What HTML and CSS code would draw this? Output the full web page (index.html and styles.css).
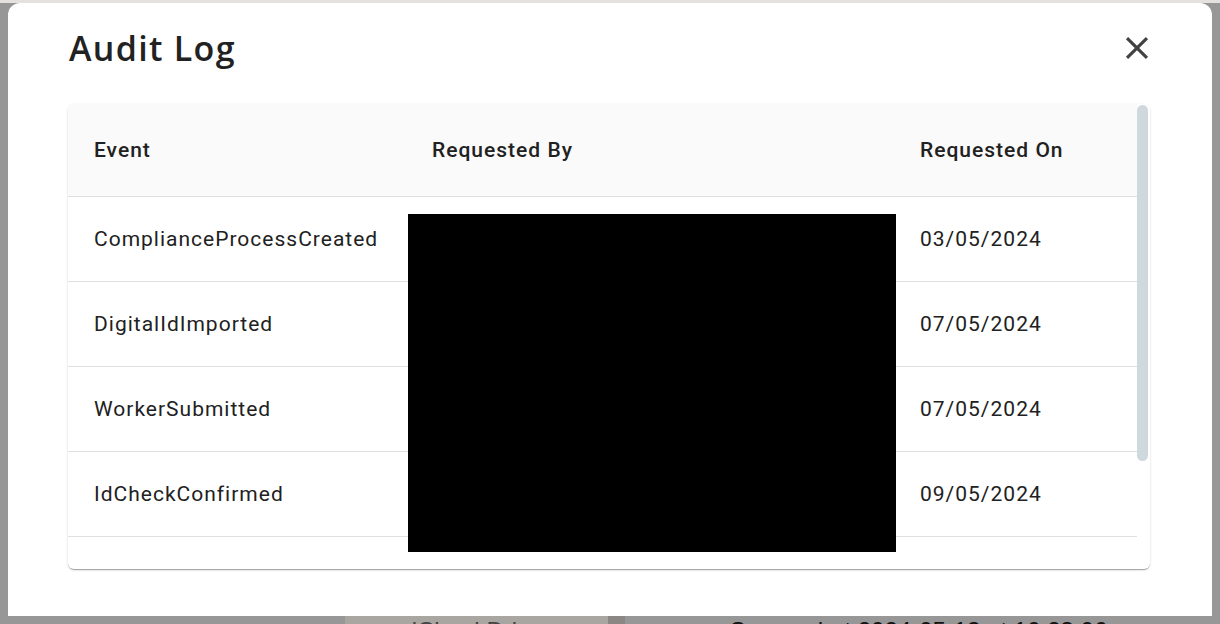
FILE: index.html
```html
<!DOCTYPE html>
<html lang="en">
  <head>
    <meta charset="UTF-8" />
    <meta name="viewport" content="width=device-width, initial-scale=1.0" />
    <title>Audit Log</title>
    <link rel="stylesheet" href="styles.css">
  </head>
  <body>
    <div class="top-strip"></div>
    <div class="dialog">
      <div class="dialog-header">
        <h2 class="dialog-title">Audit Log</h2>
        <button class="close-btn" aria-label="Close">
          <svg width="24" height="24" viewBox="0 0 24 24">
            <path d="M19 6.41 17.59 5 12 10.59 6.41 5 5 6.41 10.59 12 5 17.59 6.41 19 12 13.41 17.59 19 19 17.59 13.41 12z" fill="#424242" />
          </svg>
        </button>
      </div>

      <div class="table-card">
        <div class="table-scroll">
          <table class="audit-table">
            <colgroup>
              <col class="col-event" />
              <col class="col-by" />
              <col class="col-on" />
            </colgroup>
            <thead>
              <tr>
                <th>Event</th>
                <th>Requested By</th>
                <th>Requested On</th>
              </tr>
            </thead>
            <tbody>
              <tr>
                <td>ComplianceProcessCreated</td>
                <td></td>
                <td>03/05/2024</td>
              </tr>
              <tr>
                <td>DigitalIdImported</td>
                <td></td>
                <td>07/05/2024</td>
              </tr>
              <tr>
                <td>WorkerSubmitted</td>
                <td></td>
                <td>07/05/2024</td>
              </tr>
              <tr>
                <td>IdCheckConfirmed</td>
                <td></td>
                <td>09/05/2024</td>
              </tr>
              <tr class="partial">
                <td></td>
                <td></td>
                <td></td>
              </tr>
            </tbody>
          </table>
        </div>
        <div class="scroll-track">
          <div class="scroll-thumb"></div>
        </div>
        <div class="redacted"></div>
      </div>
    </div>

    <div class="desktop-strip">
      <div class="strip-gap"></div>
      <div class="finder-item">
        <span class="cloud">&#9729;</span> iCloud Drive
      </div>
      <div class="finder-edge"></div>
      <div class="file-row">
        <span class="file-icon"></span> Screenshot 2024-05-13 at 10.23.06
      </div>
    </div>
  </body>
</html>
```

FILE: styles.css
```css
body {
  margin: 0;
  background: #979797;
  font-family: Roboto, "Liberation Sans", Arial, sans-serif;
  width: 1220px;
  height: 624px;
  overflow: hidden;
  display: flex;
  flex-direction: column;
}

.top-strip {
  height: 3px;
  background: #e4e2df;
}

.dialog {
  margin: 0 8px;
  height: 613px;
  background: #fff;
  border-radius: 12px 12px 0 0;
  padding: 0 62px 0 60px;
  box-sizing: border-box;
  display: flex;
  flex-direction: column;
}

.dialog-header {
  display: flex;
  align-items: center;
  justify-content: space-between;
  height: 101px;
}

.dialog-title {
  margin: 0 0 12px 1px;
  font-family: "Open Sans", sans-serif;
  font-weight: 600;
  font-size: 34px;
  color: #222;
  letter-spacing: 1.3px;
}

.close-btn {
  border: none;
  background: none;
  padding: 0;
  margin-right: -6px;
  margin-bottom: 11px;
  cursor: pointer;
  display: flex;
}

.close-btn svg {
  width: 38px;
  height: 38px;
}

.table-card {
  position: relative;
  display: flex;
  height: 465px;
  border-radius: 6px;
  background: #fff;
  box-shadow: 0 2px 1px -1px rgba(0, 0, 0, 0.2), 0 1px 1px rgba(0, 0, 0, 0.14), 0 1px 3px rgba(0, 0, 0, 0.12);
  overflow: hidden;
}

.table-scroll {
  flex: 1;
  overflow: hidden;
}

.audit-table {
  width: 1069px;
  border-collapse: collapse;
  table-layout: fixed;
  color: #212121;
}

.col-event {
  width: 338px;
}
.col-by {
  width: 488px;
}

.audit-table th {
  background: #fafafa;
  height: 92px;
  text-align: left;
  font-weight: 500;
  font-size: 21px;
  letter-spacing: 1px;
  padding: 0 0 0 26px;
  border-bottom: 1px solid #e0e0e0;
  box-sizing: border-box;
}

.audit-table td {
  height: 85px;
  font-size: 21px;
  letter-spacing: 1px;
  padding: 0 0 0 26px;
  border-bottom: 1px solid #e0e0e0;
  box-sizing: border-box;
}

.scroll-track {
  width: 13px;
  padding-top: 1px;
}

.scroll-thumb {
  width: 11px;
  height: 356px;
  border-radius: 6px;
  background: #cfd8dc;
}

.redacted {
  position: absolute;
  left: 340px;
  top: 110px;
  width: 488px;
  height: 338px;
  background: #000;
}

.desktop-strip {
  height: 8px;
  overflow: hidden;
  display: flex;
  font-family: "Liberation Sans", Arial, sans-serif;
  font-size: 24px;
  color: #111;
  line-height: 1;
}

.strip-gap {
  width: 345px;
}

.finder-item {
  width: 263px;
  background: #a9a5a1;
  padding: 3px 0 0 40px;
  box-sizing: border-box;
  color: #444;
}

.cloud {
  font-size: 20px;
  color: #666;
}

.finder-edge {
  width: 17px;
  background: #8b8784;
  margin-right: 60px;
}

.file-row {
  padding-top: 3px;
}

.file-icon {
  display: inline-block;
  width: 30px;
  height: 8px;
  background: #666;
  margin-right: 8px;
}
```
